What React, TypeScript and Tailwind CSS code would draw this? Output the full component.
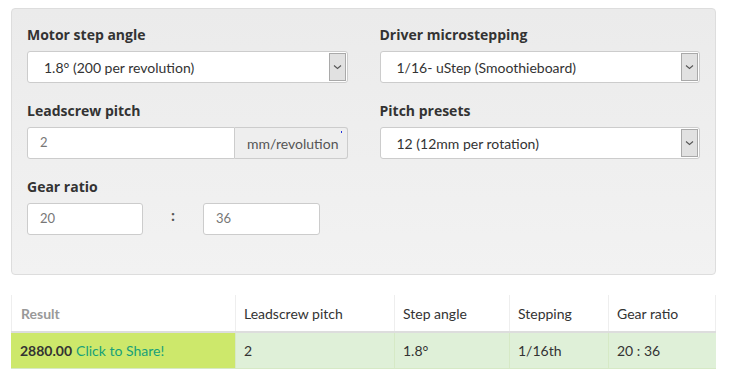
import React from "react";

const labelFont = { fontFamily: '"Open Sans", "Liberation Sans", sans-serif' };
const bodyFont = { fontFamily: 'Lato, "Liberation Sans", sans-serif' };

function Chevron() {
  return (
    <svg width="9" height="6" viewBox="0 0 9 6" fill="none">
      <path d="M1 1.5 L4.5 4.5 L8 1.5" stroke="#555" strokeWidth="1.1" />
    </svg>
  );
}

function Select({ value }: { value: string }) {
  return (
    <div className="flex h-[32px] items-stretch rounded-[3px] border border-[#ccc] bg-white">
      <div className="flex flex-1 items-center pl-4 text-[14px] text-[#333]" style={bodyFont}>
        {value}
      </div>
      <div className="my-[1px] mr-[1px] flex w-[17px] items-center justify-center border border-[#a9a9a9] bg-[#e1e1e1]">
        <Chevron />
      </div>
    </div>
  );
}

function Label({ children }: { children: React.ReactNode }) {
  return <div className="h-5 text-[14px] font-bold leading-5 text-[#333]">{children}</div>;
}

function Input({ value, className }: { value: string; className?: string }) {
  return (
    <div
      className={
        "flex h-[32px] items-center rounded-[3px] border border-[#ccc] bg-white pl-3 text-[13px] text-[#777] " +
        (className ?? "")
      }
      style={bodyFont}
    >
      {value}
    </div>
  );
}

export default function App() {
  return (
    <div className="min-h-[382px] w-[729px] bg-white pt-2 pl-[11px]" style={labelFont}>
      <div className="w-[705px] rounded-[4px] border border-[#ddd] bg-gradient-to-b from-[#ebebeb] to-[#f2f2f2] px-[15px] pt-4 pb-[39px]">
        <div className="grid grid-cols-2 gap-x-8">
          <div>
            <Label>Motor step angle</Label>
            <div className="mt-[6px]">
              <Select value="1.8° (200 per revolution)" />
            </div>
          </div>
          <div>
            <Label>Driver microstepping</Label>
            <div className="mt-[6px]">
              <Select value="1/16- uStep (Smoothieboard)" />
            </div>
          </div>

          <div className="mt-[18px]">
            <Label>Leadscrew pitch</Label>
            <div className="relative mt-[6px] flex h-[32px]" style={bodyFont}>
              <div className="flex w-[208px] items-center rounded-l-[3px] border border-[#ccc] bg-white pl-3 text-[13px] text-[#777]">
                2
              </div>
              <div className="flex flex-1 items-center rounded-r-[3px] border border-l-0 border-[#ccc] bg-[#eee] pl-3 text-[14px] text-[#555]">
                mm/revolution
              </div>
              <span className="absolute top-[4px] right-[6px] h-[2px] w-[1px] bg-[#2233dd]" />
            </div>
          </div>
          <div className="mt-[18px]">
            <Label>Pitch presets</Label>
            <div className="mt-[6px]">
              <Select value="12 (12mm per rotation)" />
            </div>
          </div>

          <div className="mt-[18px]">
            <Label>Gear ratio</Label>
            <div className="mt-[6px] flex items-center">
              <Input value="20" className="w-[116px]" />
              <div className="flex w-[60px] justify-center pb-2 text-[14px] font-bold text-[#555]">:</div>
              <Input value="36" className="w-[117px]" />
            </div>
          </div>
        </div>
      </div>

      <div className="mt-5 w-[705px] text-[14px] text-[#333]" style={bodyFont}>
        <div className="flex h-[36px] items-center bg-white">
          <div className="flex h-full w-[224px] items-center border-l border-[#eee] pl-[9px] font-bold text-[#999]">
            Result
          </div>
          <div className="flex h-full w-[159px] items-center border-l border-[#eee] pl-[8px]">Leadscrew pitch</div>
          <div className="flex h-full w-[115px] items-center border-l border-[#eee] pl-[8px]">Step angle</div>
          <div className="flex h-full w-[99px] items-center border-l border-[#eee] pl-[8px]">Stepping</div>
          <div className="flex h-full flex-1 items-center border-x border-[#eee] pl-[8px]">Gear ratio</div>
        </div>
        <div className="flex h-[38px] items-center border-t-2 border-b border-t-[#ddd] border-b-[#d6e9c6] bg-[#dff0d8]">
          <div className="flex h-full w-[224px] items-center bg-[#cde86b] pl-[9px]">
            <span className="font-bold text-[#333]">2880.00</span>
            <span className="ml-1 text-[#17a079]">Click to Share!</span>
          </div>
          <div className="flex h-full w-[159px] items-center border-l border-[#d6e9c6] pl-[8px]">2</div>
          <div className="flex h-full w-[115px] items-center border-l border-[#d6e9c6] pl-[8px]">1.8°</div>
          <div className="flex h-full w-[99px] items-center border-l border-[#d6e9c6] pl-[8px]">1/16th</div>
          <div className="flex h-full flex-1 items-center border-l border-[#d6e9c6] pl-[8px]">20 : 36</div>
        </div>
      </div>
    </div>
  );
}
